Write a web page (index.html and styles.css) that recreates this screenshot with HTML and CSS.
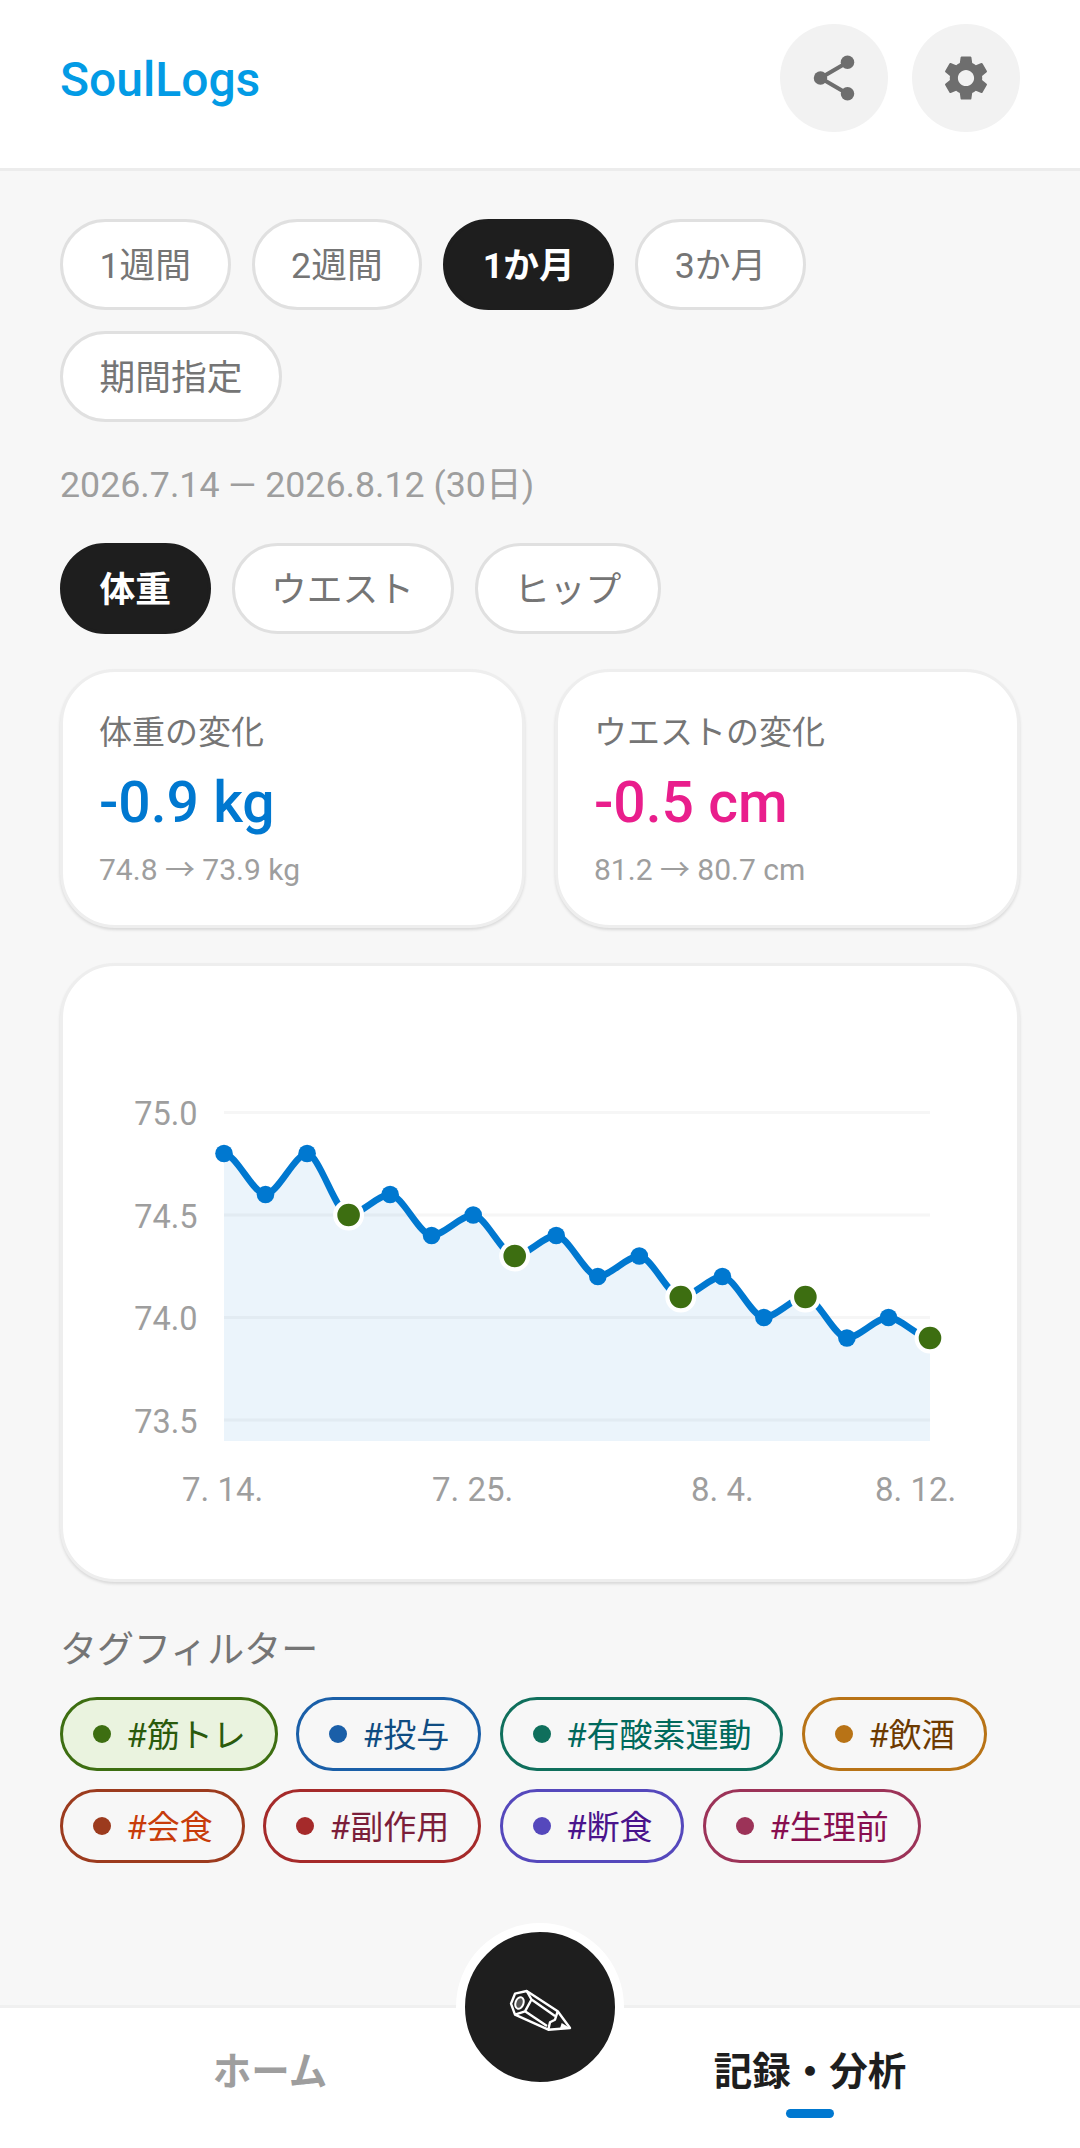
FILE: index.html
```html
<!DOCTYPE html>
<html lang="ja">
<head>
<meta charset="utf-8">
<title>SoulLogs</title>
<link rel="stylesheet" href="styles.css">
</head>
<body>
<header class="app-header">
  <div class="logo">SoulLogs</div>
  <div class="header-actions">
    <div class="icon-btn">
      <svg class="icon" viewBox="0 0 24 24"><path class="share-line" d="M18 5 6 12l12 7"/><circle class="icon-fill" cx="18" cy="5" r="3"/><circle class="icon-fill" cx="6" cy="12" r="3"/><circle class="icon-fill" cx="18" cy="19" r="3"/></svg>
    </div>
    <div class="icon-btn">
      <svg class="icon" viewBox="0 0 24 24"><path class="icon-fill" d="M19.14 12.94c.04-.3.06-.61.06-.94 0-.32-.02-.64-.07-.94l2.03-1.58c.18-.14.23-.41.12-.61l-1.92-3.32c-.12-.22-.37-.29-.59-.22l-2.39.96c-.5-.38-1.03-.7-1.62-.94l-.36-2.54c-.04-.24-.24-.41-.48-.41h-3.84c-.24 0-.43.17-.47.41l-.36 2.54c-.59.24-1.13.57-1.62.94l-2.39-.96c-.22-.08-.47 0-.59.22L2.74 8.87c-.12.21-.08.47.12.61l2.03 1.58c-.05.3-.09.63-.09.94s.02.64.07.94l-2.03 1.58c-.18.14-.23.41-.12.61l1.92 3.32c.12.22.37.29.59.22l2.39-.96c.5.38 1.03.7 1.62.94l.36 2.54c.05.24.24.41.48.41h3.84c.24 0 .44-.17.47-.41l.36-2.54c.59-.24 1.13-.56 1.62-.94l2.39.96c.22.08.47 0 .59-.22l1.92-3.32c.12-.22.07-.47-.12-.61l-2.01-1.58zM12 15.6c-1.98 0-3.6-1.62-3.6-3.6s1.62-3.6 3.6-3.6 3.6 1.62 3.6 3.6-1.62 3.6-3.6 3.6z"/></svg>
    </div>
  </div>
</header>

<main class="content">
  <div class="chip-row">
    <div class="chip">1週間</div>
    <div class="chip">2週間</div>
    <div class="chip chip-active">1か月</div>
    <div class="chip">3か月</div>
    <div class="chip">期間指定</div>
  </div>
  <div class="date-range">2026.7.14 — 2026.8.12 (30日)</div>
  <div class="chip-row metric-row">
    <div class="chip chip-active">体重</div>
    <div class="chip">ウエスト</div>
    <div class="chip">ヒップ</div>
  </div>

  <div class="stat-grid">
    <section class="card stat-card">
      <div class="stat-label">体重の変化</div>
      <div class="stat-value stat-blue">-0.9 kg</div>
      <div class="stat-sub">74.8 → 73.9 kg</div>
    </section>
    <section class="card stat-card">
      <div class="stat-label">ウエストの変化</div>
      <div class="stat-value stat-pink">-0.5 cm</div>
      <div class="stat-sub">81.2 → 80.7 cm</div>
    </section>
  </div>

  <section class="card chart-card">
    <svg class="chart" viewBox="63 966 954 613" width="954" height="613">
      <g class="grid">
        <line x1="224" x2="930" y1="1112.5" y2="1112.5"/>
        <line x1="224" x2="930" y1="1215" y2="1215"/>
        <line x1="224" x2="930" y1="1317.5" y2="1317.5"/>
        <line x1="224" x2="930" y1="1420" y2="1420"/>
      </g>
      <path class="area" d="M224 1153.5C236 1153.5 253.5 1194.5 265.5 1194.5C277.5 1194.5 295.1 1153.5 307.1 1153.5C319.1 1153.5 336.6 1215 348.6 1215C360.6 1215 378.1 1194.5 390.1 1194.5C402.1 1194.5 419.6 1235.5 431.6 1235.5C443.6 1235.5 461.2 1215 473.2 1215C485.2 1215 502.7 1256 514.7 1256C526.7 1256 544.2 1235.5 556.2 1235.5C568.2 1235.5 585.8 1276.5 597.8 1276.5C609.8 1276.5 627.3 1256 639.3 1256C651.3 1256 668.8 1297 680.8 1297C692.8 1297 710.4 1276.5 722.4 1276.5C734.4 1276.5 751.9 1317.5 763.9 1317.5C775.9 1317.5 793.4 1297 805.4 1297C817.4 1297 834.9 1338 846.9 1338C858.9 1338 876.5 1317.5 888.5 1317.5C900.5 1317.5 918 1338 930 1338L930 1441L224 1441Z"/>
      <path class="line" d="M224 1153.5C236 1153.5 253.5 1194.5 265.5 1194.5C277.5 1194.5 295.1 1153.5 307.1 1153.5C319.1 1153.5 336.6 1215 348.6 1215C360.6 1215 378.1 1194.5 390.1 1194.5C402.1 1194.5 419.6 1235.5 431.6 1235.5C443.6 1235.5 461.2 1215 473.2 1215C485.2 1215 502.7 1256 514.7 1256C526.7 1256 544.2 1235.5 556.2 1235.5C568.2 1235.5 585.8 1276.5 597.8 1276.5C609.8 1276.5 627.3 1256 639.3 1256C651.3 1256 668.8 1297 680.8 1297C692.8 1297 710.4 1276.5 722.4 1276.5C734.4 1276.5 751.9 1317.5 763.9 1317.5C775.9 1317.5 793.4 1297 805.4 1297C817.4 1297 834.9 1338 846.9 1338C858.9 1338 876.5 1317.5 888.5 1317.5C900.5 1317.5 918 1338 930 1338"/>
      <g class="pt">
        <circle cx="224" cy="1153.5" r="8.8"/>
        <circle cx="265.5" cy="1194.5" r="8.8"/>
        <circle cx="307.1" cy="1153.5" r="8.8"/>
        <circle cx="390.1" cy="1194.5" r="8.8"/>
        <circle cx="431.6" cy="1235.5" r="8.8"/>
        <circle cx="473.2" cy="1215" r="8.8"/>
        <circle cx="556.2" cy="1235.5" r="8.8"/>
        <circle cx="597.8" cy="1276.5" r="8.8"/>
        <circle cx="639.3" cy="1256" r="8.8"/>
        <circle cx="722.4" cy="1276.5" r="8.8"/>
        <circle cx="763.9" cy="1317.5" r="8.8"/>
        <circle cx="846.9" cy="1338" r="8.8"/>
        <circle cx="888.5" cy="1317.5" r="8.8"/>
      </g>
      <g class="pt-tag">
        <circle cx="348.6" cy="1215" r="13.4"/>
        <circle cx="514.7" cy="1256" r="13.4"/>
        <circle cx="680.8" cy="1297" r="13.4"/>
        <circle cx="805.4" cy="1297" r="13.4"/>
        <circle cx="930" cy="1338" r="13.4"/>
      </g>
      <g class="axis axis-y">
        <text x="197.5" y="1125">75.0</text>
        <text x="197.5" y="1227.5">74.5</text>
        <text x="197.5" y="1330">74.0</text>
        <text x="197.5" y="1432.5">73.5</text>
      </g>
      <g class="axis">
        <text x="182" y="1500.5">7. 14.</text>
        <text x="432" y="1500.5">7. 25.</text>
        <text x="691" y="1500.5">8. 4.</text>
        <text x="875" y="1500.5">8. 12.</text>
      </g>
    </svg>
  </section>

  <div class="tag-title">タグフィルター</div>
  <div class="tag-row">
    <div class="tag tag-green"><span class="tag-dot"></span>#筋トレ</div>
    <div class="tag tag-blue"><span class="tag-dot"></span>#投与</div>
    <div class="tag tag-teal"><span class="tag-dot"></span>#有酸素運動</div>
    <div class="tag tag-amber"><span class="tag-dot"></span>#飲酒</div>
    <div class="tag tag-rust"><span class="tag-dot"></span>#会食</div>
    <div class="tag tag-red"><span class="tag-dot"></span>#副作用</div>
    <div class="tag tag-violet"><span class="tag-dot"></span>#断食</div>
    <div class="tag tag-plum"><span class="tag-dot"></span>#生理前</div>
  </div>
</main>

<nav class="bottom-nav">
  <div class="tab">ホーム</div>
  <div class="tab tab-active">記録・分析<span class="tab-indicator"></span></div>
  <div class="fab">
    <svg class="pencil" viewBox="0 0 70 56">
      <path class="pencil-line" d="M6 20.7 10 10.7 21.7 8 52.7 28.3 65 45 43.3 46.7 10 31.7Z"/>
      <path class="pencil-line" d="M21.7 8 26.5 16.5 20 28.3 10 31.7M26.5 16.5 50 33M20 28.3 42 43M52.7 28.3 50 36.7 45 39.3 43.3 46.7"/>
      <ellipse class="pencil-fill" cx="14.5" cy="20" rx="4" ry="6" transform="rotate(20 14.5 20)"/>
      <path class="pencil-tip" d="M56.7 40 65 45 55 45.6Z"/>
    </svg>
  </div>
</nav>
</body>
</html>
```

FILE: styles.css
```css
* { box-sizing: border-box; }

html, body { margin: 0; padding: 0; }

body {
  width: 1080px;
  height: 2148px;
  display: flex;
  flex-direction: column;
  background: #f7f7f7;
  font-family: Roboto, "Noto Sans CJK JP", sans-serif;
  overflow: hidden;
}

.app-header {
  height: 171px;
  flex: none;
  background: #fff;
  border-bottom: 3px solid #ececec;
  padding: 24px 60px 0;
  display: flex;
  justify-content: space-between;
  align-items: flex-start;
}

.logo {
  font-size: 48px;
  font-weight: 500;
  line-height: 108px;
  color: #039be5;
  margin-top: 2px;
}

.header-actions { display: flex; gap: 24px; }

.icon-btn {
  width: 108px;
  height: 108px;
  border-radius: 50%;
  background: #f2f2f2;
  display: flex;
  align-items: center;
  justify-content: center;
}

.icon { width: 54px; height: 54px; display: block; }
.icon-fill { fill: #6e6e6e; }
.share-line { fill: none; stroke: #6e6e6e; stroke-width: 1.8; }

.content {
  flex: 1;
  padding: 48px 60px 0;
}

.chip-row { display: flex; flex-wrap: wrap; gap: 21px; }

.chip {
  height: 91px;
  padding: 0 36.5px 4px;
  border: 3px solid #e0e0e0;
  border-radius: 46px;
  background: #fff;
  color: #757575;
  font-size: 35.75px;
  display: flex;
  align-items: center;
  justify-content: center;
}

.chip-active {
  background: #1e1e1e;
  border-color: #1e1e1e;
  color: #fff;
  font-weight: 700;
}

.date-range {
  margin-top: 41px;
  line-height: 44px;
  font-size: 35.75px;
  color: #9e9e9e;
}

.metric-row { margin-top: 36px; }

.stat-grid {
  margin-top: 35px;
  display: grid;
  grid-template-columns: 1fr 1fr;
  gap: 30px;
}

.card {
  background: #fff;
  border: 3px solid #eee;
  border-radius: 55px;
  box-shadow: 0 2px 3px rgba(0, 0, 0, 0.12);
}

.stat-card {
  height: 259px;
  padding: 39px 36px 0;
}

.stat-label {
  font-size: 33px;
  line-height: 44px;
  color: #757575;
}

.stat-value {
  margin-top: 14px;
  font-size: 57px;
  font-weight: 500;
  line-height: 68px;
}

.stat-blue { color: #0078d0; }
.stat-pink { color: #e91e8c; }

.stat-sub {
  margin-top: 13px;
  font-size: 30px;
  line-height: 40px;
  color: #9e9e9e;
}

.chart-card {
  margin-top: 35px;
  height: 619px;
  overflow: hidden;
}

.chart { display: block; }

.grid line { stroke: #f6f6f6; stroke-width: 3; }
.area { fill: #0078d0; fill-opacity: 0.08; stroke: none; }
.line { fill: none; stroke: #0078d0; stroke-width: 6.5; stroke-linecap: round; }
.pt circle { fill: #0078d0; }
.pt-tag circle { fill: #3d6e11; stroke: #fff; stroke-width: 4.2; }

.axis text {
  font-family: Roboto, sans-serif;
  font-size: 33px;
  fill: #9e9e9e;
}

.axis-y text { text-anchor: end; font-size: 32.5px; }

.tag-title {
  margin-top: 47px;
  font-size: 37px;
  line-height: 44px;
  color: #757575;
}

.tag-row {
  margin-top: 24px;
  display: flex;
  flex-wrap: wrap;
  gap: 18px 18.5px;
}

.tag {
  --tag: #888;
  height: 74px;
  padding: 0 29px 3px 30px;
  border: 3px solid var(--tag);
  border-radius: 37px;
  background: transparent;
  font-size: 33px;
  display: flex;
  align-items: center;
}

.tag-dot {
  width: 18px;
  height: 18px;
  border-radius: 50%;
  background: var(--tag);
  margin: 3px 15.5px 0 0;
  flex: none;
}

.tag-green  { --tag: #3d6e11; color: #2a5a0c; background: #eaf3df; }
.tag-blue   { --tag: #1a5fa8; color: #0f4c81; }
.tag-teal   { --tag: #0f6f5c; color: #00695c; }
.tag-amber  { --tag: #b87316; color: #6d3a00; }
.tag-rust   { --tag: #9c3b1e; color: #c83c0a; }
.tag-red    { --tag: #a52a2a; color: #7b1e3a; }
.tag-violet { --tag: #5548bc; color: #4a148c; }
.tag-plum   { --tag: #9c3358; color: #880e4f; }

.bottom-nav {
  position: relative;
  flex: none;
  height: 143px;
  background: #fff;
  border-top: 3px solid #f0f0f0;
  display: flex;
}

.tab {
  position: relative;
  flex: 1;
  text-align: center;
  padding-top: 42px;
  font-size: 38.5px;
  line-height: 44px;
  font-weight: 700;
  color: #9e9e9e;
}

.tab-active { color: #1e1e1e; }

.tab-indicator {
  position: absolute;
  left: 50%;
  top: 101px;
  width: 48px;
  height: 9px;
  margin-left: -24px;
  border-radius: 5px;
  background: #0078d0;
}

.fab {
  position: absolute;
  left: 456px;
  top: -85px;
  width: 168px;
  height: 168px;
  border: 9px solid #fff;
  border-radius: 50%;
  background: #1e1e1e;
  display: flex;
  align-items: center;
  justify-content: center;
}

.pencil { width: 70px; height: 56px; margin-top: 8px; display: block; }
.pencil-line { fill: none; stroke: #fff; stroke-width: 2.4; stroke-linejoin: round; }
.pencil-fill { fill: #fff; fill-opacity: 0.25; stroke: #fff; stroke-width: 2; }
.pencil-tip { fill: #fff; }
```
